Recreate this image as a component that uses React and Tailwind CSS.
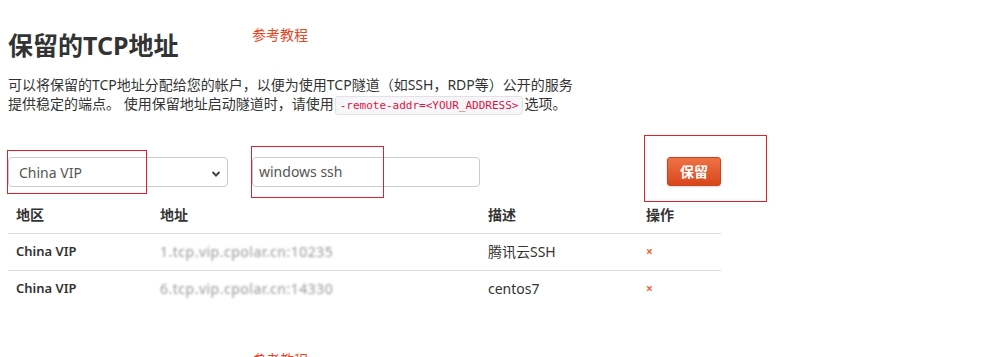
import React from "react";

const font = { fontFamily: '"Noto Sans", "Noto Sans CJK SC", sans-serif' };

function Chevron() {
  return (
    <svg width="10" height="8" viewBox="0 0 10 8" className="absolute right-[6px] top-[12px]">
      <path d="M1.5 2 L5 5.5 L8.5 2" fill="none" stroke="#444" strokeWidth="2" />
    </svg>
  );
}

function Section({ title }) {
  return (
    <div className="flex items-start">
      <h1 className="w-[244px] mt-[2px] text-[25px] leading-[36px] font-bold text-[#333]">{title}</h1>
      <a className="text-[14px] leading-[20px] text-[#e8461e]">参考教程</a>
    </div>
  );
}

const rows = [
  { region: "China VIP", addr: "1.tcp.vip.cpolar.cn:10235", desc: "腾讯云SSH" },
  { region: "China VIP", addr: "6.tcp.vip.cpolar.cn:14330", desc: "centos7" },
];

export default function App() {
  return (
    <div className="relative w-[988px] h-[357px] overflow-hidden bg-white pl-2 pt-[25px] text-[#333]" style={font}>
      <Section title="保留的TCP地址" />
      <p className="mt-[12px] text-[14px] leading-[19px] text-[#333]">
        可以将保留的TCP地址分配给您的帐户，以便为使用TCP隧道（如SSH，RDP等）公开的服务
        <br />
        提供稳定的端点。 使用保留地址启动隧道时，请使用
        <code
          className="mx-[1px] rounded-[3px] border border-[#e1e1e8] bg-[#f7f7f9] px-[4px] py-[2px] text-[11px] text-[#dd1144]"
          style={{ fontFamily: '"DejaVu Sans Mono", monospace' }}
        >
          -remote-addr=&lt;YOUR_ADDRESS&gt;
        </code>
        选项。
      </p>

      <div className="mt-[42px] flex items-start">
        <div className="relative w-[220px] h-[30px] rounded-[4px] border border-[#ccc] bg-white">
          <span className="absolute left-[10px] top-[5px] text-[14px] leading-[20px] text-[#555]">China VIP</span>
          <Chevron />
        </div>
        <div className="ml-[24px] w-[228px] h-[30px] rounded-[4px] border border-[#ccc] bg-white px-[6px] text-[14px] leading-[28px] text-[#555]">
          windows ssh
        </div>
        <button className="ml-[187px] w-[54px] h-[29px] rounded-[3px] border border-[#c94419] bg-gradient-to-b from-[#ee7145] to-[#d9461b] text-[14px] font-bold text-white shadow-[0_1px_2px_rgba(0,0,0,0.15)]">
          保留
        </button>
      </div>

      <table className="mt-[9px] w-[713px] border-collapse text-[14px]">
        <thead>
          <tr className="h-[37px] border-b border-[#ddd] text-left">
            <th className="w-[144px] pl-2 font-bold">地区</th>
            <th className="w-[328px] pl-2 font-bold">地址</th>
            <th className="w-[158px] pl-2 font-bold">描述</th>
            <th className="pl-2 font-bold">操作</th>
          </tr>
        </thead>
        <tbody>
          {rows.map((r, i) => (
            <tr key={i} className={i === 0 ? "h-[37px] border-b border-[#ddd]" : "h-[37px]"}>
              <td className="pl-2 text-[13px] font-semibold">{r.region}</td>
              <td className="pl-2 text-[14px] tracking-[0.5px] text-[#999] blur-[1.2px]">{r.addr}</td>
              <td className="pl-2">{r.desc}</td>
              <td className="pl-2 text-[12px] font-bold text-[#e8663a]">×</td>
            </tr>
          ))}
        </tbody>
      </table>

      <div className="mt-[43px]">
        <Section title="保留的二级子域名" />
      </div>

      <div className="absolute left-[7px] top-[150px] w-[140px] h-[44px] border border-[#e0202a]" />
      <div className="absolute left-[251px] top-[146px] w-[133px] h-[52px] border border-[#e0202a]" />
      <div className="absolute left-[644px] top-[135px] w-[123px] h-[67px] border border-[#e0202a]" />
    </div>
  );
}
